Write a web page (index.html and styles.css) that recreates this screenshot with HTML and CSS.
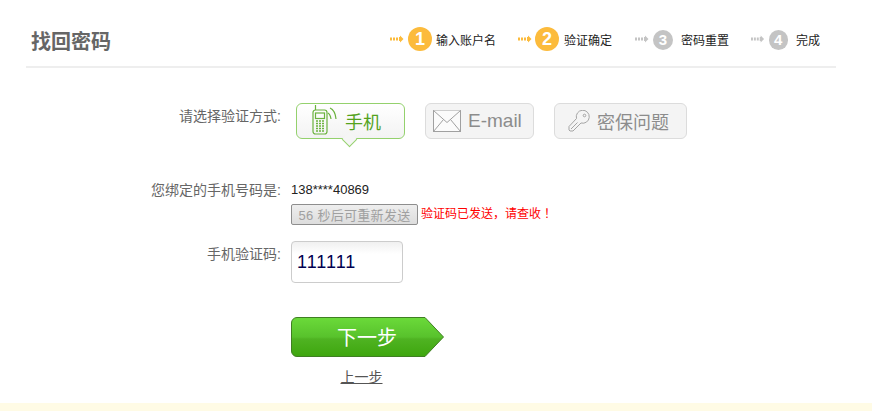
FILE: index.html
```html
<!DOCTYPE html>
<html lang="zh-CN">
<head>
<meta charset="UTF-8">
<meta name="viewport" content="width=device-width, initial-scale=1.0">
<title>找回密码</title>
<link rel="stylesheet" href="styles.css">
</head>
<body>
  <div class="container">
    <div class="head">
      <h1>找回密码</h1>
      <div class="steps">
        <div class="step step-on step-1">
          <svg class="dash" width="14" height="8" viewBox="0 0 14 8"><path d="M0 2.500h2v3H0zM3 2.500h2v3H3zM6 2.500h2v3H6z M9 2h1V0.500L13.500 4 10 7.500V6H9z"/></svg>
          <span class="num">1</span><span class="txt">输入账户名</span>
        </div>
        <div class="step step-on step-2">
          <svg class="dash" width="14" height="8" viewBox="0 0 14 8"><path d="M0 2.500h2v3H0zM3 2.500h2v3H3zM6 2.500h2v3H6z M9 2h1V0.500L13.500 4 10 7.500V6H9z"/></svg>
          <span class="num">2</span><span class="txt">验证确定</span>
        </div>
        <div class="step step-3">
          <svg class="dash" width="14" height="8" viewBox="0 0 14 8"><path d="M0 2.500h2v3H0zM3 2.500h2v3H3zM6 2.500h2v3H6z M9 2h1V0.500L13.500 4 10 7.500V6H9z"/></svg>
          <span class="num">3</span><span class="txt">密码重置</span>
        </div>
        <div class="step step-4">
          <svg class="dash" width="14" height="8" viewBox="0 0 14 8"><path d="M0 2.500h2v3H0zM3 2.500h2v3H3zM6 2.500h2v3H6z M9 2h1V0.500L13.500 4 10 7.500V6H9z"/></svg>
          <span class="num">4</span><span class="txt">完成</span>
        </div>
      </div>
    </div>

    <div class="form">
      <div class="row row-way">
        <label>请选择验证方式:</label>
        <div class="ways">
          <div class="way way-on">
            <svg class="ico-phone" width="26" height="33" viewBox="0 0 26 33" fill="none" stroke="#6bb23e" stroke-width="1.200">
              <path d="M3.500 8V3"/>
              <rect x="1" y="8" width="14" height="24" rx="2.500"/>
              <rect x="3.500" y="11" width="9" height="5.500"/>
              <path d="M4 19h8M4 21.500h8M4 24h8M4 26.500h8M4 29h8" stroke-width="1.600" stroke-dasharray="2 1"/>
              <path d="M18 6c3.500 1.500 5.500 6 6 11M16 11c1.500.8 2.500 3 3 6"/>
            </svg>
            <span>手机</span>
            <i class="arrow"></i>
          </div>
          <div class="way way-mail">
            <svg width="28" height="22" viewBox="0 0 28 22" fill="#fbfbfb" stroke="#a0a0a0">
              <rect x=".5" y=".5" width="27" height="21"/>
              <path d="M.5 .5 14 12.500 27.500 .5M.5 21.500 10.500 9.500M27.500 21.500 17.500 9.500"/>
            </svg>
            <span>E-mail</span>
          </div>
          <div class="way way-key">
            <svg width="22" height="22" viewBox="0 0 22 22" fill="none" stroke="#a5a5a5">
              <path d="M8.500 8.500a6.500 6.500 0 1 1 4.500 4.500L5 21H2L1 20v-3.500z"/>
              <path d="M3 19 9.500 12.500"/>
              <circle cx="16.500" cy="5.500" r="1.300"/>
            </svg>
            <span>密保问题</span>
          </div>
        </div>
      </div>

      <div class="row row-phone">
        <label>您绑定的手机号码是:</label>
        <div class="phone">138****40869</div>
      </div>
      <div class="row row-send">
        <label></label>
        <div class="send">
          <button class="btn-send" disabled>56 秒后可重新发送</button>
          <span class="tip">验证码已发送，请查收<span class="bang">！</span></span>
        </div>
      </div>
      <div class="row row-code">
        <label>手机验证码:</label>
        <input class="code" type="text" value="111111">
      </div>
      <div class="row row-next">
        <label></label>
        <div class="actions">
          <svg class="next-bg" width="153" height="40" viewBox="0 0 153 40">
            <defs>
              <linearGradient id="nextFill" x1="0" y1="0" x2="0" y2="1">
                <stop offset="0" stop-color="#6bda3a"/>
                <stop offset=".5" stop-color="#58c22c"/>
                <stop offset=".55" stop-color="#4fb322"/>
                <stop offset="1" stop-color="#3ea60e"/>
              </linearGradient>
            </defs>
            <path d="M6 .5H134L152.500 20 134 39.500H6A5.500 5.500 0 0 1 .5 34V6A5.500 5.500 0 0 1 6 .5z" fill="url(#nextFill)" stroke="#3f7f22"/>
          </svg>
          <a class="next" href="#">下一步</a>
          <a class="prev" href="#">上一步</a>
        </div>
      </div>
    </div>
  </div>
  <div class="foot"></div>
</body>
</html>
```

FILE: styles.css
```css
body {
  margin: 0;
  background: #fff;
  font-family: "Liberation Sans", Arial, "Noto Sans CJK SC", sans-serif;
  font-size: 12px;
  color: #666;
}

.container {
  height: 403px;
  overflow: hidden;
  padding: 0 36px 0 26px;
}

.head {
  display: flex;
  justify-content: space-between;
  height: 66px;
  border-bottom: 2px solid #eee;
}

h1 {
  margin: 29px 0 0 5px;
  font-size: 20px;
  line-height: 26px;
  color: #666;
}

.steps {
  display: flex;
  padding: 27px 16px 0 0;
}

.step {
  display: flex;
  align-items: center;
  height: 24px;
  color: #222;
  font-size: 12px;
  white-space: nowrap;
}

.step-1 { width: 128px; }
.step-2 { width: 117px; }
.step-3 { width: 116px; }
.step-4 { width: 69px; }

.dash {
  fill: #c4c4c4;
  margin-right: 4px;
}

.num {
  width: 20px;
  height: 20px;
  border-radius: 50%;
  background: #c4c4c4;
  color: #fff;
  font-size: 15px;
  font-weight: bold;
  line-height: 20px;
  text-align: center;
  margin: 2px 8px 0 0;
}

.step-3 .txt, .step-4 .txt { margin-top: 1px; }

.step-on .dash { fill: #fcbb3c; }

.step-on .num {
  width: 24px;
  height: 24px;
  background: #fcbb3c;
  font-size: 18px;
  line-height: 24px;
  margin: 0 4px 0 0;
}

.step-2 .dash { margin-right: 3px; }
.step-2 .num { margin-right: 5px; }

.row {
  display: grid;
  grid-template-columns: 255px 1fr;
  column-gap: 10px;
}

.row label {
  text-align: right;
  font-size: 14px;
  line-height: 18px;
}

.row-way { padding-top: 35px; height: 78px; }
.row-way label { padding-top: 4px; }

.ways {
  display: flex;
  align-items: flex-start;
  gap: 20px;
  padding-left: 5px;
}

.way {
  position: relative;
  display: flex;
  align-items: center;
  gap: 7px;
  box-sizing: border-box;
  height: 36px;
  width: 109px;
  padding-left: 7px;
  border: 1px solid #dcdcdc;
  border-radius: 6px;
  background: #f4f4f4;
  font-size: 18px;
  color: #8c8c8c;
}

.way-mail { font-size: 19px; }

.way-key {
  width: 133px;
  padding-left: 13px;
}

.way-on {
  padding-left: 15px;
  border-color: #94d16d;
  background: linear-gradient(#fff, #f3f3f3);
  color: #54a31d;
}

.ico-phone { margin-top: -5px; }

.arrow {
  position: absolute;
  left: 47px;
  bottom: -7px;
  width: 10px;
  height: 10px;
  background: #f5f5f5;
  border-right: 1px solid #94d16d;
  border-bottom: 1px solid #94d16d;
  transform: rotate(45deg);
}

.row-phone { height: 23px; }

.phone {
  font-size: 13px;
  line-height: 18px;
  color: #222;
}

.row-send { height: 37px; }

.send { display: flex; align-items: flex-start; }

.btn-send {
  width: 127px;
  height: 21px;
  padding: 0;
  border: 1px solid #8e8e8e;
  border-radius: 2px;
  background: linear-gradient(#eee, #ddd);
  font-family: inherit;
  font-size: 13px;
  letter-spacing: .3px;
  color: #a0a0a0;
}

.tip {
  margin-left: 3px;
  font-size: 12px;
  line-height: 21px;
  color: #f00;
}

.bang { margin-left: 3px; }

.row-code { height: 76px; }
.row-code label { padding-top: 4px; }

.code {
  box-sizing: border-box;
  width: 112px;
  height: 42px;
  padding: 0 5px;
  border: 1px solid #ccc;
  border-radius: 4px;
  background: linear-gradient(#f0f0f0, #fff 12px);
  font-family: inherit;
  font-size: 18px;
  letter-spacing: 1px;
  color: #000050;
}

.actions {
  position: relative;
  width: 153px;
}

.next-bg { display: block; }

.next {
  position: absolute;
  left: 0;
  top: 0;
  width: 152px;
  font-size: 20px;
  line-height: 42px;
  text-align: center;
  text-decoration: none;
  color: #fff;
}

.prev {
  display: block;
  width: 141px;
  margin-top: 12px;
  font-size: 14px;
  line-height: 16px;
  text-align: center;
  color: #555;
}

.foot {
  height: 8px;
  background: #fffbe5;
}
```
